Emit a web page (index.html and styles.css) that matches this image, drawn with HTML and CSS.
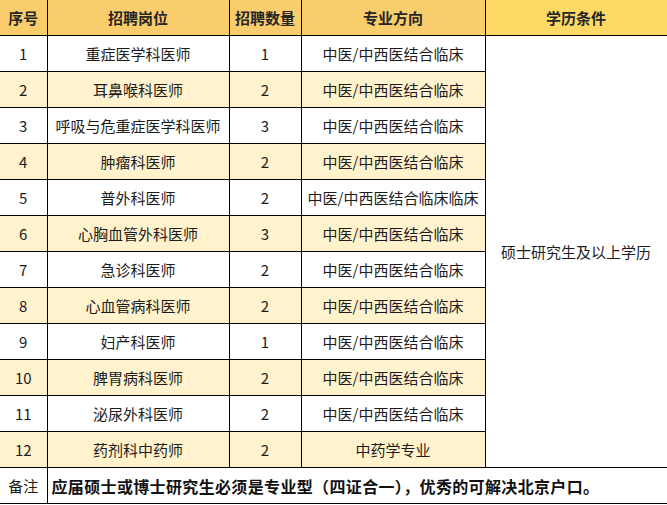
FILE: index.html
```html
<!DOCTYPE html>
<html lang="zh">
<head>
<meta charset="utf-8">
<title>招聘岗位</title>
<link rel="stylesheet" href="styles.css">
</head>
<body>
<table class="jobs">
  <colgroup>
    <col class="c1"><col class="c2"><col class="c3"><col class="c4"><col class="c5">
  </colgroup>
  <thead>
    <tr class="head">
      <th>序号</th><th>招聘岗位</th><th>招聘数量</th><th>专业方向</th><th>学历条件</th>
    </tr>
  </thead>
  <tbody>
    <tr class="odd"><td>1</td><td>重症医学科医师</td><td>1</td><td>中医/中西医结合临床</td><td class="edu" rowspan="12">硕士研究生及以上学历</td></tr>
    <tr class="even"><td>2</td><td>耳鼻喉科医师</td><td>2</td><td>中医/中西医结合临床</td></tr>
    <tr class="odd"><td>3</td><td>呼吸与危重症医学科医师</td><td>3</td><td>中医/中西医结合临床</td></tr>
    <tr class="even"><td>4</td><td>肿瘤科医师</td><td>2</td><td>中医/中西医结合临床</td></tr>
    <tr class="odd"><td>5</td><td>普外科医师</td><td>2</td><td>中医/中西医结合临床临床</td></tr>
    <tr class="even"><td>6</td><td>心胸血管外科医师</td><td>3</td><td>中医/中西医结合临床</td></tr>
    <tr class="odd"><td>7</td><td>急诊科医师</td><td>2</td><td>中医/中西医结合临床</td></tr>
    <tr class="even"><td>8</td><td>心血管病科医师</td><td>2</td><td>中医/中西医结合临床</td></tr>
    <tr class="odd"><td>9</td><td>妇产科医师</td><td>1</td><td>中医/中西医结合临床</td></tr>
    <tr class="even"><td>10</td><td>脾胃病科医师</td><td>2</td><td>中医/中西医结合临床</td></tr>
    <tr class="odd"><td>11</td><td>泌尿外科医师</td><td>2</td><td>中医/中西医结合临床</td></tr>
    <tr class="even"><td>12</td><td>药剂科中药师</td><td>2</td><td>中药学专业</td></tr>
    <tr class="note"><td class="note-label">备注</td><td class="note-text" colspan="4">应届硕士或博士研究生必须是专业型（四证合一），优秀的可解决北京户口。</td></tr>
  </tbody>
</table>
</body>
</html>
```

FILE: styles.css
```css
html, body {
  margin: 0;
  padding: 0;
  background: #ffffff;
}

.jobs {
  border-collapse: collapse;
  table-layout: fixed;
  width: 667px;
  font-family: "Noto Sans CJK SC", "Noto Sans", sans-serif;
  color: #1c1c1c;
}

.c1 { width: 47px; }
.c2 { width: 182px; }
.c3 { width: 72px; }
.c4 { width: 184px; }
.c5 { width: 182px; }

.jobs th,
.jobs td {
  border: 1px solid #000;
  height: 35px;
  padding: 0;
  text-align: center;
  vertical-align: middle;
  font-size: 15px;
  line-height: 20px;
  white-space: nowrap;
}

.jobs th:first-child,
.jobs td:first-child {
  border-left: none;
}

.head th {
  border-top: none;
  font-weight: bold;
  color: #262626;
  background: #f9cd6b;
}

.head th:last-child {
  background: #ffd966;
}

.odd td {
  background: #ffffff;
}

.even td {
  background: #fff2cc;
}

.jobs td.edu {
  background: #ffffff;
}

.note td {
  background: #ffffff;
}

.note-label {
  font-size: 14px;
}

.jobs td.note-text {
  text-align: left;
  padding-left: 4px;
  font-size: 16px;
  font-weight: bold;
  letter-spacing: 0.35px;
  color: #111;
}
```
